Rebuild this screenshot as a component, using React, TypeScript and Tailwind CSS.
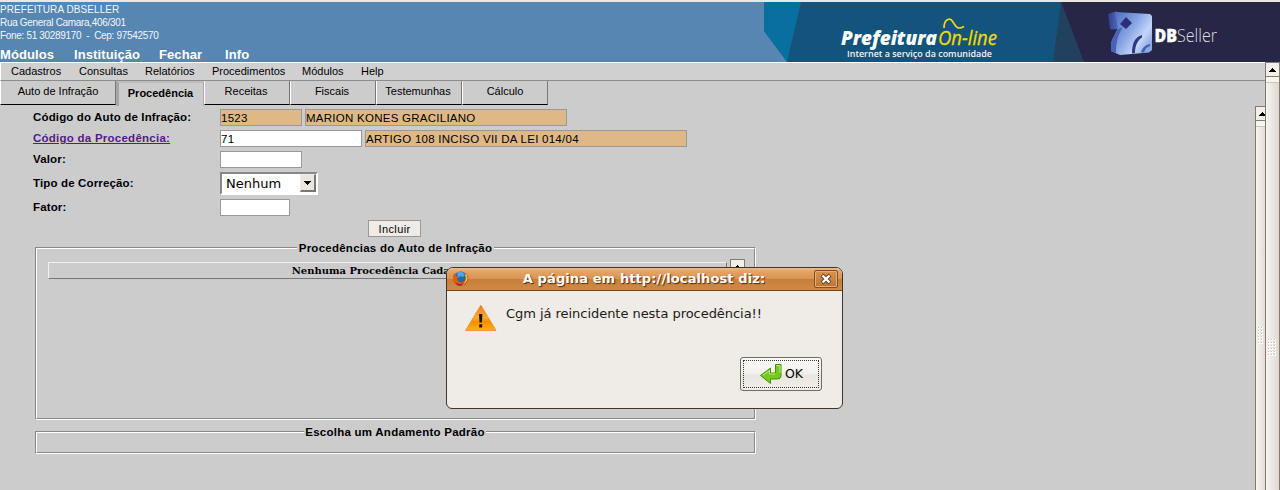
import React from "react";

const SANS = "font-['Liberation_Sans',Arial,sans-serif]";
const DEJA = "font-['DejaVu_Sans',Verdana,sans-serif]";

function Arrow({ down = false }: { down?: boolean }) {
  return (
    <svg width="7" height="4" viewBox="0 0 7 4" shapeRendering="crispEdges" className="shrink-0">
      <path d={down ? "M0 0h7v1H0zM1 1h5v1H1zM2 2h3v1H2zM3 3h1v1H3z" : "M3 0h1v1H3zM2 1h3v1H2zM1 2h5v1H1zM0 3h7v1H0z"} fill="#000" />
    </svg>
  );
}

function Grip({ cols, rows }: { cols: number; rows: number }) {
  const cells = [];
  for (let r = 0; r < rows; r++)
    for (let c = 0; c < cols; c++)
      cells.push(
        <g key={`${r}-${c}`}>
          <rect x={c * 3} y={r * 3} width="2" height="2" fill="#fff" />
          <rect x={c * 3} y={r * 3} width="1" height="1" fill="#c3beb8" />
        </g>
      );
  return (
    <svg width={cols * 3} height={rows * 3} shapeRendering="crispEdges">
      {cells}
    </svg>
  );
}

function Brand() {
  return (
    <svg width="516" height="60" viewBox="0 0 516 60" className="block shrink-0">
      <rect width="516" height="60" fill="#14537b" />
      <path d="M0 0H37L23 60L0 29Z" fill="#096ea0" />
      <path d="M0 29L23 60H0Z" fill="#5786b2" />
      <path d="M297 0L320 60H289Z" fill="#22415f" />
      <path d="M297 0H516V60H320Z" fill="#272647" />
      <text x="77" y="43" textLength="96" lengthAdjust="spacingAndGlyphs" fontFamily="Open Sans" fontWeight="800" fontStyle="italic" fontSize="19" fill="#fff">Prefeitura</text>
      <text x="174" y="43" textLength="59" lengthAdjust="spacingAndGlyphs" fontFamily="Open Sans" fontStyle="italic" fontSize="20" fill="#efdc0c" stroke="#efdc0c" strokeWidth=".3">On-line</text>
      <path d="M180 26C180 17 186 15 189 20S194 28 200 24.5" fill="none" stroke="#efdc0c" strokeWidth="1.7" />
      <text x="83" y="55" textLength="145" lengthAdjust="spacingAndGlyphs" fontFamily="Open Sans" fontWeight="600" fontSize="9.5" fill="#f0f5fa">Internet a serviço da comunidade</text>
      <defs>
        <linearGradient id="cube" x1="0" y1="0" x2="1" y2=".7">
          <stop offset="0" stopColor="#4a62b8" />
          <stop offset=".5" stopColor="#86a3e4" />
          <stop offset=".8" stopColor="#c3d6f8" />
          <stop offset="1" stopColor="#8ea8e2" />
        </linearGradient>
        <linearGradient id="cubeSide" x1="0" y1="0" x2="1" y2="0">
          <stop offset="0" stopColor="#2f3f8c" />
          <stop offset="1" stopColor="#5c78cc" />
        </linearGradient>
      </defs>
      <path d="M344 12L352 9.5L357 11V27L346 27.500Z" fill="url(#cubeSide)" />
      <path d="M351 10L386 12L388 14V48L385 50.500L356 53L347 49L348 38L354 26Z" fill="url(#cube)" />
      <path d="M347 40L354 27L359 25C353 34 352 43 352 51L347 49Z" fill="#4b63b6" />
      <path d="M362 15L368 21L362 27L356 22Z" fill="#2b2f7b" />
      <path d="M378 33C371 35 368 41 368 51.500L371 51C371 43 374 38 378 35.500Z" fill="#2b3a86" />
      <path d="M386 42C381 43 378 46 377 50.500L380 50.500C381 47 383 45 386 44Z" fill="#4860b2" />
      <text x="390.5" y="40" textLength="22.500" lengthAdjust="spacingAndGlyphs" fontFamily="Open Sans" fontWeight="800" fontSize="17" fill="#fff" stroke="#fff" strokeWidth=".4">DB</text>
      <text x="413" y="40" textLength="40" lengthAdjust="spacingAndGlyphs" fontFamily="Open Sans" fontWeight="300" fontSize="18" fill="#dfdfe8">Seller</text>
    </svg>
  );
}

function Tab({ label, className = "" }: { label: string; className?: string }) {
  return (
    <div className={`h-6 border-l border-r border-b border-l-white border-r-[#777] border-b-black text-center leading-[21px] ${className}`}>
      {label}
    </div>
  );
}

function Field({ value = "", className = "" }: { value?: string; className?: string }) {
  return <div className={`h-[17px] overflow-hidden border border-[#999] whitespace-nowrap text-[11.5px] leading-[17px] tracking-[0.26px] ${className}`}>{value}</div>;
}

function Row({ label, className = "", children }: { label: React.ReactNode; className?: string; children: React.ReactNode }) {
  return (
    <div className={`flex items-center ${className}`}>
      <div className="w-[187px] shrink-0 text-[11.5px] leading-[15px] font-bold tracking-[0.15px] whitespace-nowrap">{label}</div>
      <div className="flex gap-[3px]">{children}</div>
    </div>
  );
}

function Groove({ title, className, titleClass, children }: { title: string; className: string; titleClass: string; children?: React.ReactNode }) {
  return (
    <div className={`relative w-[721px] border border-[#888] border-r-white border-b-white ${className}`}>
      <div className="h-full border border-white border-r-[#888] border-b-[#888]">{children}</div>
      <div className={`absolute -top-[7px] h-[14px] bg-[#ccc] text-center text-[11.5px] leading-[14px] font-bold tracking-[0.25px] whitespace-nowrap ${titleClass}`}>{title}</div>
    </div>
  );
}

function Firefox() {
  return (
    <svg width="18" height="18" viewBox="0 0 18 18">
      <circle cx="8.7" cy="8.5" r="7" fill="#2468b0" />
      <path d="M5 3Q9 0 13 4L11 7L8 6L6 8Z" fill="#55a4dc" />
      <path d="M1 5L3 3L4 6L6 7L5 9C6 13 12 14 13.500 9L14 6L13 3C17 5 18 10 14 14C9 18 2 16 1 10Z" fill="#df5c14" />
      <path d="M2 10C4 15 10 15 13 12L15 11C14 15 9 17 5 15Z" fill="#a81f24" />
      <path d="M14 4C17 8 15 14 9 16C14 12 15 9 13 5Z" fill="#f4c72e" />
    </svg>
  );
}

function Dialog() {
  return (
    <div className={`absolute left-[446px] top-[267px] flex h-[142px] w-[397px] flex-col overflow-hidden rounded-[7px] rounded-b-[6px] border border-[#3e352c] bg-[#efebe7] text-[13px] ${DEJA}`}>
      <div className="flex h-[23px] shrink-0 items-center border-b border-[#704620] bg-[linear-gradient(#f0bd85_0%,#e3a468_15%,#d8934f_50%,#c67f3a_52%,#d08a48_100%)] pl-[5px] pr-1">
        <Firefox />
        <div className="grow pl-[4px] text-center text-[13px] font-bold tracking-[0.1px] whitespace-nowrap text-white [text-shadow:1px_1px_1px_#4b2a0c]">A página em http://localhost diz:</div>
        <div className="flex h-[18px] w-6 shrink-0 items-center justify-center rounded-[2px] border border-[#824e20] bg-gradient-to-b from-[#d9944f] to-[#bd7536] shadow-[inset_0_0_0_1px_#e5ad76]">
          <svg width="12" height="12" viewBox="0 0 12 12">
            <path d="M2 2L10 10M10 2L2 10" stroke="#63391a" strokeWidth="4" />
            <path d="M2.5 2.5L9.5 9.5M9.5 2.5L2.5 9.5" stroke="#fff" strokeWidth="2.4" />
          </svg>
        </div>
      </div>
      <div className="flex grow flex-col px-[18px] pt-[13px]">
        <div className="flex">
          <svg width="32" height="28" viewBox="0 0 32 28">
            <defs>
              <linearGradient id="warn" x1="0" y1="0" x2="0" y2="1">
                <stop offset="0" stopColor="#ef7c22" />
                <stop offset=".5" stopColor="#f9ac31" />
                <stop offset=".65" stopColor="#fb8b00" />
                <stop offset="1" stopColor="#ffb400" />
              </linearGradient>
            </defs>
            <path d="M15.8 1.2L31 26.4H.6Z" fill="url(#warn)" stroke="#e6882a" strokeWidth=".8" />
            <path d="M14 10h3.400l-.5 8.500h-2.400zM14.200 20.300h3v3.200h-3z" fill="#1a1408" />
          </svg>
          <div className="pl-[9px] leading-[19px] tracking-[-0.04px] whitespace-nowrap text-[#1a1a1a]">Cgm já reincidente nesta procedência!!</div>
        </div>
      </div>
      <div className="mr-5 mb-[17px] flex h-[34px] w-[82px] shrink-0 self-end rounded-[3px] border border-[#75695c] bg-[linear-gradient(#fbfaf8_0%,#f3f0ed_50%,#e9e5e0_52%,#f1eeeb_100%)] p-[2px]">
        <div className="flex grow items-center justify-center gap-[2px] border border-dotted border-[#333]">
          <svg width="24" height="22" viewBox="0 0 24 22">
            <path d="M16.500 1.500H22V13Q22 16 18 16H11.500V20.500L1.500 12.500L11.500 5V10H16.500Z" fill="#76c91d" stroke="#4a8d10" />
            <path d="M17.500 2.500H21V10M16.500 11H10.500V7.500L4 12.300" fill="none" stroke="#b7ed75" />
          </svg>
          <span className="pt-px text-[12.5px]">OK</span>
        </div>
      </div>
    </div>
  );
}

export default function App() {
  return (
    <div className={`relative flex h-[490px] w-[1280px] flex-col overflow-hidden bg-[#ccc] text-[11px] text-black ${SANS}`}>
      <header className="flex h-[62px] shrink-0 border-t-2 border-[#ebe8e4] bg-[#5786b2]">
        <div className="flex grow flex-col pt-px text-[10px] leading-[13px] text-[#f2f6fa]">
          <div className="tracking-[0.08px] whitespace-pre">PREFEITURA DBSELLER</div>
          <div className="tracking-[-0.32px] whitespace-pre">Rua General Camara,406/301</div>
          <div className="tracking-[-0.32px] whitespace-pre">Fone: 51 30289170  -  Cep: 97542570</div>
          <nav className="mt-[5px] flex text-[13px] leading-[15px] font-bold tracking-[0.1px] text-white">
            <div className="w-[74px]">Módulos</div>
            <div className="w-[85px]">Instituição</div>
            <div className="w-[66px]">Fechar</div>
            <div>Info</div>
          </nav>
        </div>
        <Brand />
      </header>
      <div className="flex grow">
        <main className="flex grow flex-col">
          <nav className="flex h-[19px] shrink-0 border-t border-b border-l border-t-white border-b-[#8c8c8c] border-l-white bg-[#d0d0d0] pl-[10px] leading-[17px]">
            <div className="w-[68px]">Cadastros</div>
            <div className="w-[66px]">Consultas</div>
            <div className="w-[67px]">Relatórios</div>
            <div className="w-[90px]">Procedimentos</div>
            <div className="w-[59px]">Módulos</div>
            <div>Help</div>
          </nav>
          <div className="flex grow">
            <div className="flex grow flex-col">
              <div className="flex h-[25px] shrink-0">
                <Tab label="Auto de Infração" className="w-[116px]" />
                <div className="h-[25px] w-[88px] border-t-2 border-r border-l-[3px] border-t-[#bdbdbd] border-r-[#aaa] border-l-[#a6a6a6] pr-[1px] text-center leading-[21px] font-bold">Procedência</div>
                <Tab label="Receitas" className="w-[86px] pr-[2px]" />
                <Tab label="Fiscais" className="w-[86px] pr-[2px]" />
                <Tab label="Testemunhas" className="w-[86px] pr-[2px]" />
                <Tab label="Cálculo" className="w-[86px]" />
              </div>
              <div className="flex flex-col pt-[3px] pl-[33px]">
                <Row label="Código do Auto de Infração:" className="h-[17px]">
                  <Field value="1523" className="w-[82px] bg-[#deb887]" />
                  <Field value="MARION KONES GRACILIANO" className="w-[262px] bg-[#deb887]" />
                </Row>
                <Row label={<span className="tracking-[0.25px] text-[#551a8b] underline">Código da Procedência:</span>} className="mt-1 h-[17px]">
                  <Field value="71" className="w-[142px] bg-white" />
                  <Field value="ARTIGO 108 INCISO VII DA LEI 014/04" className="w-[322px] bg-[#deb887]" />
                </Row>
                <Row label="Valor:" className="mt-1 h-[17px]">
                  <Field className="w-[82px] bg-white" />
                </Row>
                <Row label="Tipo de Correção:" className="mt-1 h-[23px]">
                  <div className="flex h-[23px] w-[98px] border-2 border-[#888] border-r-white border-b-white bg-white">
                    <div className={`grow pl-1 text-[13px] leading-[19px] ${DEJA}`}>Nenhum</div>
                    <div className="flex h-[18px] w-4 items-center justify-center border border-r-2 border-b-2 border-[#eee] border-r-[#777] border-b-[#777] bg-[#e9e5e0]">
                      <Arrow down />
                    </div>
                  </div>
                </Row>
                <Row label="Fator:" className="mt-1 h-[17px]">
                  <Field className="w-[70px] bg-white" />
                </Row>
                <div className="mt-1 ml-[335px] h-[17px] w-[53px] border border-[#999] bg-[#efebe7] text-center leading-[17px] tracking-[0.4px]">Incluir</div>
              </div>
              <div className="flex flex-col gap-[11px] pt-[10px] pl-[35px]">
                <Groove title="Procedências do Auto de Infração" className="h-[173px]" titleClass="left-[261px] w-[197px]">
                  <div className="flex gap-[3px] pt-[10px] pl-[11px]">
                    <div className="mt-[3px] h-[17px] w-[679px] border border-[#f0f0f0] border-r-[#777] border-b-[#777] pl-[2px] text-center font-['DejaVu_Serif',serif] text-[10px] leading-[15px] font-bold">Nenhuma Procedência Cadastrada</div>
                    <div className="flex h-[15px] w-[15px] items-center justify-center border border-[#857b6b] bg-[#f2efeb]">
                      <Arrow />
                    </div>
                  </div>
                </Groove>
                <Groove title="Escolha um Andamento Padrão" className="h-[23px]" titleClass="left-[268px] w-[182px]" />
              </div>
            </div>
            <div className="mt-[25px] flex w-[10px] shrink-0 flex-col overflow-hidden border-t border-l border-[#857b6b] bg-gradient-to-r from-[#f7f5f2] to-[#e2dcd6]">
              <div className="flex h-[14px] shrink-0 items-center border-b border-[#857b6b] bg-[#f2efeb] pl-[3px]">
                <Arrow />
              </div>
              <div className="h-[6px] shrink-0 border-b border-[#ccc6be] bg-[#f7f5f2]" />
              <div className="pt-[200px] pl-[2px]">
                <Grip cols={2} rows={6} />
              </div>
            </div>
          </div>
        </main>
        <div className="flex w-[15px] shrink-0 flex-col border-x border-t border-[#857b6b] bg-gradient-to-r from-[#f7f5f2] to-[#dfd7d1]">
          <div className="flex h-[14px] shrink-0 items-center justify-center border-b border-[#857b6b] bg-[#f2efeb]">
            <Arrow />
          </div>
          <div className="h-[6px] shrink-0 border-b border-[#ccc6be] bg-[#f7f5f2]" />
          <div className="flex justify-center pt-[256px]">
            <Grip cols={3} rows={6} />
          </div>
        </div>
      </div>
      <Dialog />
    </div>
  );
}
